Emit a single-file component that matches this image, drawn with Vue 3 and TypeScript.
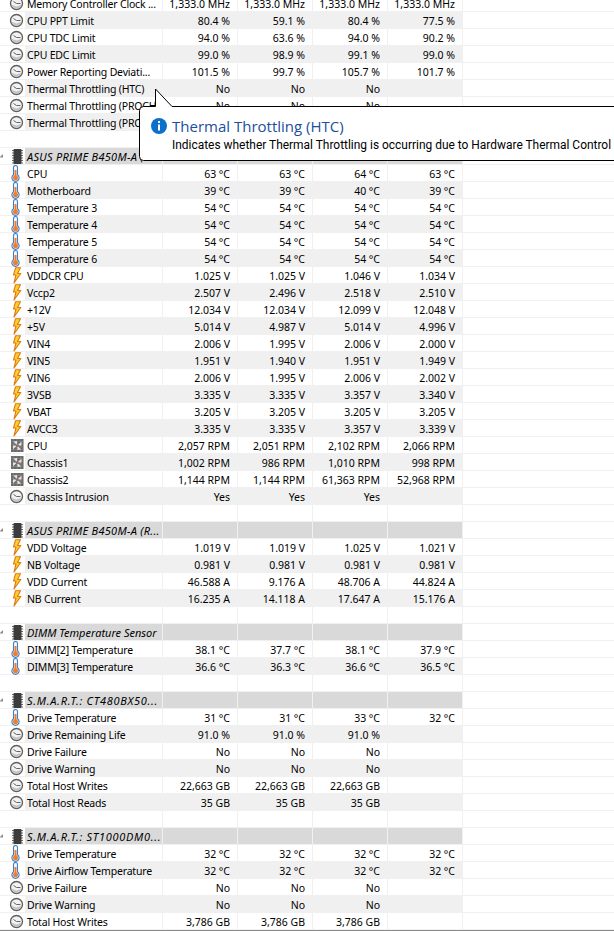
<script setup lang="ts">
type IconKind = 'gauge' | 'temp' | 'volt' | 'fan' | 'chip'
type Spread = '' | 'asus' | 'smart'
interface Row {
  kind: 'blank' | 'header' | 'data'
  label?: string
  icon?: IconKind
  values?: string[]
  spread?: Spread
}

const blank = (): Row => ({ kind: 'blank' })
const header = (label: string, spread: Spread = ''): Row => ({ kind: 'header', label, icon: 'chip', spread })
const d = (icon: IconKind, label: string, values: string[], unit = ''): Row => ({
  kind: 'data',
  icon,
  label,
  values: values.map((v) => (v && unit ? `${v} ${unit}` : v)),
})
const no3 = ['No', 'No', 'No', '']

const rows: Row[] = [
  d('gauge', 'Memory Controller Clock ...', ['1,333.0', '1,333.0', '1,333.0', '1,333.0'], 'MHz'),
  d('gauge', 'CPU PPT Limit', ['80.4', '59.1', '80.4', '77.5'], '%'),
  d('gauge', 'CPU TDC Limit', ['94.0', '63.6', '94.0', '90.2'], '%'),
  d('gauge', 'CPU EDC Limit', ['99.0', '98.9', '99.1', '99.0'], '%'),
  d('gauge', 'Power Reporting Deviati...', ['101.5', '99.7', '105.7', '101.7'], '%'),
  d('gauge', 'Thermal Throttling (HTC)', no3),
  d('gauge', 'Thermal Throttling (PROCHOT CPU)', no3),
  d('gauge', 'Thermal Throttling (PROCHOT EXT)', no3),
  blank(),
  header('ASUS PRIME B450M-A (R...', 'asus'),
  d('temp', 'CPU', ['63', '63', '64', '63'], '°C'),
  d('temp', 'Motherboard', ['39', '39', '40', '39'], '°C'),
  d('temp', 'Temperature 3', ['54', '54', '54', '54'], '°C'),
  d('temp', 'Temperature 4', ['54', '54', '54', '54'], '°C'),
  d('temp', 'Temperature 5', ['54', '54', '54', '54'], '°C'),
  d('temp', 'Temperature 6', ['54', '54', '54', '54'], '°C'),
  d('volt', 'VDDCR CPU', ['1.025', '1.025', '1.046', '1.034'], 'V'),
  d('volt', 'Vccp2', ['2.507', '2.496', '2.518', '2.510'], 'V'),
  d('volt', '+12V', ['12.034', '12.034', '12.099', '12.048'], 'V'),
  d('volt', '+5V', ['5.014', '4.987', '5.014', '4.996'], 'V'),
  d('volt', 'VIN4', ['2.006', '1.995', '2.006', '2.000'], 'V'),
  d('volt', 'VIN5', ['1.951', '1.940', '1.951', '1.949'], 'V'),
  d('volt', 'VIN6', ['2.006', '1.995', '2.006', '2.002'], 'V'),
  d('volt', '3VSB', ['3.335', '3.335', '3.357', '3.340'], 'V'),
  d('volt', 'VBAT', ['3.205', '3.205', '3.205', '3.205'], 'V'),
  d('volt', 'AVCC3', ['3.335', '3.335', '3.357', '3.339'], 'V'),
  d('fan', 'CPU', ['2,057', '2,051', '2,102', '2,066'], 'RPM'),
  d('fan', 'Chassis1', ['1,002', '986', '1,010', '998'], 'RPM'),
  d('fan', 'Chassis2', ['1,144', '1,144', '61,363', '52,968'], 'RPM'),
  d('gauge', 'Chassis Intrusion', ['Yes', 'Yes', 'Yes', '']),
  blank(),
  header('ASUS PRIME B450M-A (R...', 'asus'),
  d('volt', 'VDD Voltage', ['1.019', '1.019', '1.025', '1.021'], 'V'),
  d('volt', 'NB Voltage', ['0.981', '0.981', '0.981', '0.981'], 'V'),
  d('volt', 'VDD Current', ['46.588', '9.176', '48.706', '44.824'], 'A'),
  d('volt', 'NB Current', ['16.235', '14.118', '17.647', '15.176'], 'A'),
  blank(),
  header('DIMM Temperature Sensor'),
  d('temp', 'DIMM[2] Temperature', ['38.1', '37.7', '38.1', '37.9'], '°C'),
  d('temp', 'DIMM[3] Temperature', ['36.6', '36.3', '36.6', '36.5'], '°C'),
  blank(),
  header('S.M.A.R.T.: CT480BX50...', 'smart'),
  d('temp', 'Drive Temperature', ['31', '31', '33', '32'], '°C'),
  d('gauge', 'Drive Remaining Life', ['91.0', '91.0', '91.0', ''], '%'),
  d('gauge', 'Drive Failure', no3),
  d('gauge', 'Drive Warning', no3),
  d('gauge', 'Total Host Writes', ['22,663', '22,663', '22,663', ''], 'GB'),
  d('gauge', 'Total Host Reads', ['35', '35', '35', ''], 'GB'),
  blank(),
  header('S.M.A.R.T.: ST1000DM0...', 'smart'),
  d('temp', 'Drive Temperature', ['32', '32', '32', '32'], '°C'),
  d('temp', 'Drive Airflow Temperature', ['32', '32', '32', '32'], '°C'),
  d('gauge', 'Drive Failure', no3),
  d('gauge', 'Drive Warning', no3),
  d('gauge', 'Total Host Writes', ['3,786', '3,786', '3,786', ''], 'GB'),
]

const emptyCells = ['', '', '', '']
const rowClass = (r: Row, i: number): string[] => [
  r.kind === 'header' ? 'is-header' : '',
  r.kind === 'data' && i % 2 === 1 ? 'is-alt' : '',
  r.spread ? `spread-${r.spread}` : '',
]
</script>

<template>
  <div class="window">
    <div class="grid">
      <div v-for="(r, i) in rows" :key="i" class="row" :class="rowClass(r, i)">
        <div class="gutter">
          <svg v-if="r.kind === 'header'" class="chev" width="6" height="6" viewBox="0 0 6 6">
            <path d="M0.5 4.5 L4 4.5 L4 1 Z" fill="#8a8a8a" />
          </svg>
          <svg v-if="r.icon === 'gauge'" class="ic" width="16" height="16" viewBox="0 0 16 16">
            <circle cx="8.500" cy="8.500" r="6" fill="#f2f2f2" />
            <path d="M3 9.500 A6 6 0 0 0 14 9.500 L8.500 11.500 Z" fill="#c4c4c4" />
            <path d="M8.500 8.500 H12.500 M8.500 8.500 L5.500 6.500" stroke="#666" stroke-width="1" fill="none" />
            <circle cx="8.500" cy="8.500" r="6" fill="none" stroke="#606060" stroke-width="1.300" />
          </svg>
          <svg v-else-if="r.icon === 'temp'" class="ic" width="16" height="17" viewBox="0 0 16 17">
            <path d="M5.500 2.500 a2 2 0 0 1 4 0 V9.800 a3.600 3.600 0 1 1 -4 0 Z" fill="#f6f8fb" stroke="#3f7fc8" stroke-width="1.100" />
            <rect x="6.500" y="5" width="2" height="6" fill="#ee7d2d" />
            <circle cx="7.500" cy="12.800" r="2.500" fill="#ee7d2d" />
          </svg>
          <svg v-else-if="r.icon === 'volt'" class="ic" width="16" height="17" viewBox="0 0 16 17">
            <path d="M7.500 0.800 L5.500 8 H8 L6 16 L12.800 6.500 H9.500 L12.500 0.800 Z" fill="#ffcf2a" stroke="#dd7a14" stroke-width="1.100" stroke-linejoin="round" />
          </svg>
          <svg v-else-if="r.icon === 'fan'" class="ic" width="16" height="16" viewBox="0 0 16 16">
            <rect x="3" y="2" width="12.500" height="13" fill="#6a6a6a" />
            <path d="M3 4.500 H15.500 M3 7 H15.500 M3 10 H15.500 M3 12.500 H15.500 M5.500 2 V15 M9 2 V15 M12.500 2 V15" stroke="#8c8c8c" stroke-width="0.600" />
            <path d="M9.200 8.500 L5.500 4.500 L9 4 Z M9.200 8.500 L13.500 4.800 L13.500 8.500 Z M9.200 8.500 L13 12.500 L9.500 13 Z M9.200 8.500 L5 12.200 L5 8.500 Z" fill="#e9e2e2" />
            <circle cx="9.200" cy="8.500" r="1.500" fill="#8f7272" />
          </svg>
          <svg v-else-if="r.icon === 'chip'" class="ic" width="16" height="17" viewBox="0 0 16 17">
            <path d="M4 2.500 H15 M4 5 H15 M4 7.500 H15 M4 10 H15 M4 12.500 H15 M4 15 H15" stroke="#6c6c6c" stroke-width="1.100" />
            <rect x="5.500" y="1" width="8" height="15" rx="1" fill="#3c3c3c" />
          </svg>
        </div>
        <div class="cell name">{{ r.label }}</div>
        <div v-for="(v, j) in r.values ?? emptyCells" :key="j" class="cell val">{{ v }}</div>
        <div class="rest"></div>
      </div>
    </div>
    <div class="edge"></div>

    <div class="balloon">
      <svg class="balloon-shape" width="475" height="73" viewBox="0 0 475 73">
        <path
          d="M480 18.500 H33 L16.500 1 V18.500 H4.500 Q0.500 18.500 0.500 22.500 V68.500 Q0.500 72.500 4.500 72.500 H480"
          fill="#fff"
          stroke="#000"
          stroke-width="1"
        />
      </svg>
      <div class="balloon-body">
        <svg class="info" width="18" height="18" viewBox="0 0 18 18">
          <circle cx="9" cy="9" r="8" fill="#0a70cc" />
          <rect x="8" y="7.500" width="2" height="6" fill="#fff" />
          <rect x="8" y="4" width="2" height="2" fill="#fff" />
        </svg>
        <div class="balloon-text">
          <div class="title">Thermal Throttling (HTC)</div>
          <div class="desc">Indicates whether Thermal Throttling is occurring due to Hardware Thermal Control</div>
        </div>
      </div>
    </div>
  </div>
</template>

<style scoped>
.window {
  position: relative;
  width: 614px;
  height: 931px;
  overflow: hidden;
  background: #fff;
  display: flex;
  flex-direction: column;
  font-family: "Noto Sans", sans-serif;
  font-size: 10.5px;
  color: #000;
}
.grid {
  flex: 1;
  min-height: 0;
  overflow: hidden;
  margin-top: -5px;
}
.row {
  display: flex;
  height: 17px;
  box-sizing: border-box;
  border-bottom: 1px solid #f0f0f0;
}
.gutter {
  position: relative;
  flex: 0 0 25px;
  height: 16px;
}
.chev {
  position: absolute;
  left: -1px;
  top: 5px;
}
.ic {
  position: absolute;
  left: 8px;
  top: 0;
}
.cell {
  box-sizing: border-box;
  height: 16px;
  line-height: 18px;
  white-space: nowrap;
  overflow: hidden;
  border-right: 1px solid #f0f0f0;
}
.name {
  flex: 0 0 138px;
  padding-left: 2px;
  letter-spacing: -0.18px;
}
.val {
  flex: 0 0 75px;
  text-align: right;
  padding-right: 7px;
}
.rest {
  flex: 1;
}
.is-alt .cell {
  background: #f0f0f0;
}
.is-header .cell {
  background: #d9d9d9;
}
.is-header .name {
  font-style: italic;
  font-size: 11px;
  letter-spacing: 0;
}
.spread-asus .name {
  letter-spacing: 0.28px;
}
.spread-smart .name {
  letter-spacing: 0.7px;
}
.edge {
  flex: 0 0 1px;
  background: #8c8c8c;
}
.balloon {
  position: absolute;
  left: 139px;
  top: 88px;
  width: 475px;
  height: 73px;
}
.balloon-shape {
  position: absolute;
  left: 0;
  top: 0;
}
.balloon-body {
  position: absolute;
  left: 11px;
  top: 28px;
  display: flex;
  gap: 4px;
}
.info {
  flex: none;
  margin-top: 1px;
}
.balloon-text {
  white-space: nowrap;
}
.title {
  font-family: "Open Sans", sans-serif;
  font-size: 15px;
  line-height: 20px;
  color: #1c4f9c;
}
.desc {
  font-family: Roboto, sans-serif;
  font-size: 11.95px;
  line-height: 17px;
  margin-top: 1px;
  color: #000;
}
</style>
